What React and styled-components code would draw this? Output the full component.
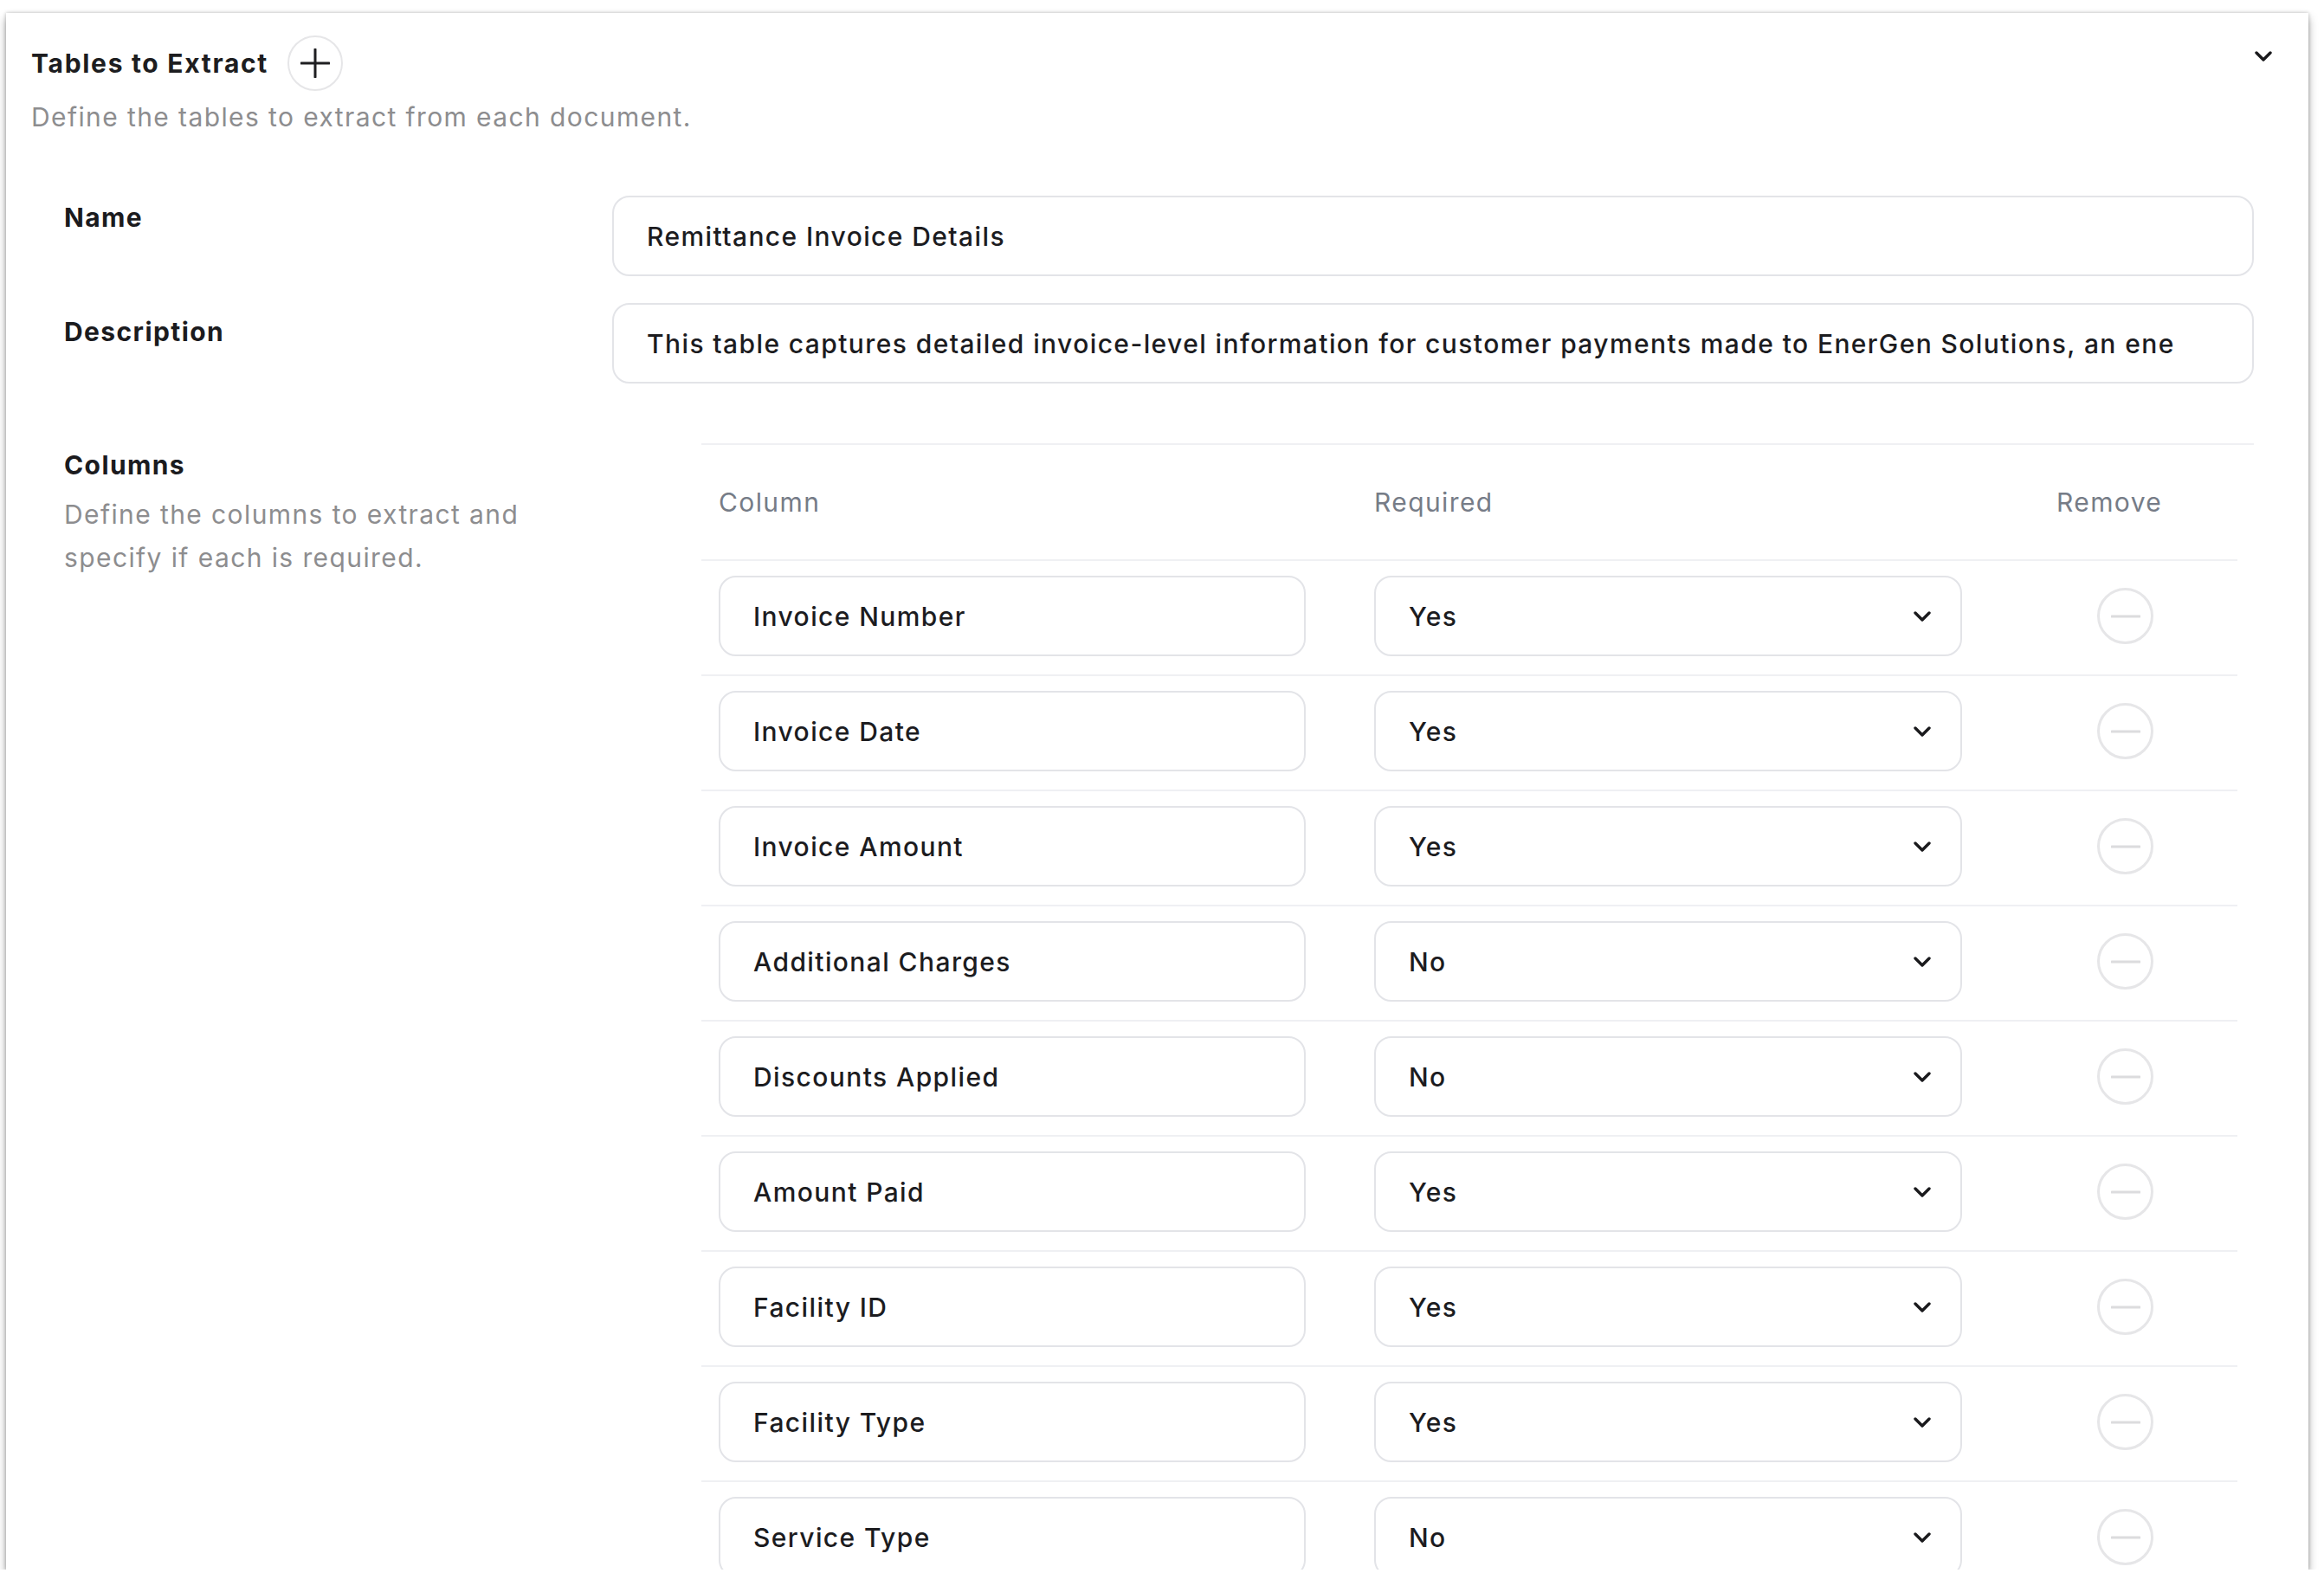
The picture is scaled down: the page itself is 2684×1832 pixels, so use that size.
import React from "react";
import styled, { createGlobalStyle } from "styled-components";

const GlobalStyle = createGlobalStyle`
  html, body {
    margin: 0;
    padding: 0;
    background: #ffffff;
  }
  body {
    font-family: Inter, "Noto Sans", "Liberation Sans", sans-serif;
    letter-spacing: 1.4px;
    -webkit-font-smoothing: antialiased;
  }
  * { box-sizing: border-box; }
`;

const Card = styled.section`
  margin: 15px 0 0 7px;
  width: 2659px;
  height: 1798px;
  overflow: hidden;
  background: #ffffff;
  box-shadow: 0 6px 10px rgba(0, 0, 0, 0.34), 0 0 4px rgba(0, 0, 0, 0.24);
  padding: 26px 0 0 29px;
`;

const HeaderRow = styled.div`
  display: flex;
  align-items: center;
  height: 64px;
  padding-right: 42px;
`;

const Title = styled.h2`
  margin: 0;
  font-size: 30px;
  line-height: 36px;
  font-weight: 700;
  color: #1d1d20;
  letter-spacing: 1.7px;
`;

const RoundButton = styled.button`
  width: ${(p) => p.size}px;
  height: ${(p) => p.size}px;
  margin-left: ${(p) => p.offset || 0}px;
  border-radius: 50%;
  border: ${(p) => p.border}px solid #e6e6e8;
  background: #ffffff;
  display: flex;
  align-items: center;
  justify-content: center;
  padding: 0;
  flex: none;
  cursor: pointer;
`;

const CollapseToggle = styled.div`
  margin-left: auto;
  align-self: flex-start;
  margin-top: 18px;
  display: flex;
`;

const Subtitle = styled.p`
  margin: 12px 0 0;
  font-size: 30px;
  line-height: 36px;
  color: #8d8d8f;
  font-weight: 400;
`;

const Form = styled.div`
  margin-top: 73px;
  padding: 0 63px 0 38px;
  display: flex;
  flex-direction: column;
  gap: 31px;
`;

const FieldRow = styled.div`
  display: grid;
  grid-template-columns: ${(p) => p.labelWidth}px 1fr;
  align-items: start;
`;

const Label = styled.div`
  padding-top: ${(p) => p.top || 7}px;
  font-size: 30px;
  line-height: 36px;
  font-weight: 650;
  color: #1b1b1e;
`;

const HelpText = styled.p`
  margin: 14px 0 0;
  max-width: 600px;
  font-size: 30px;
  line-height: 50px;
  color: #8d8d8f;
`;

const TextBox = styled.div`
  height: 93px;
  border: 2px solid #e3e4e8;
  border-radius: 20px;
  background: #ffffff;
  display: flex;
  align-items: center;
  padding: 0 38px;
  font-size: 30px;
  font-weight: 500;
  color: #1c1c1f;
  white-space: nowrap;
  overflow: hidden;
`;

const SelectBox = styled(TextBox)`
  justify-content: space-between;
  padding-right: 34px;
`;

const ColumnsSection = styled(FieldRow)`
  margin-top: 38px;
`;

const Table = styled.div`
  border-top: 2px solid #eff0f3;
`;

const Row = styled.div`
  display: grid;
  grid-template-columns: 678px 679px 1fr;
  column-gap: 79px;
  align-items: center;
  margin-right: 19px;
  padding: ${(p) => (p.header ? "0 0 0 20px" : "17px 0 21px 20px")};
  height: ${(p) => (p.header ? "134px" : "auto")};
  border-bottom: 2px solid #eff0f3;
`;

const HeadCell = styled.div`
  font-size: 30px;
  line-height: 36px;
  color: #767c87;
  padding-left: ${(p) => p.indent || 0}px;
`;

const RemoveCell = styled.div`
  display: flex;
  padding-left: 77px;
`;

const PlusIcon = () => (
  <svg width="34" height="34" viewBox="0 0 34 34" fill="none">
    <path d="M17 1v32M1 17h32" stroke="#1e1e21" strokeWidth="3" strokeLinecap="round" />
  </svg>
);

const MinusIcon = () => (
  <svg width="34" height="4" viewBox="0 0 34 4" fill="none">
    <path d="M1 2h32" stroke="#dcdcde" strokeWidth="3" strokeLinecap="round" />
  </svg>
);

const Chevron = ({ w = 20, h = 12, sw = 3.4 }) => (
  <svg width={w} height={h} viewBox="0 0 20 12" fill="none">
    <path d="M2 2l8 8 8-8" stroke="#1a1a1d" strokeWidth={sw} strokeLinecap="round" strokeLinejoin="round" />
  </svg>
);

const columns = [
  ["Invoice Number", "Yes"],
  ["Invoice Date", "Yes"],
  ["Invoice Amount", "Yes"],
  ["Additional Charges", "No"],
  ["Discounts Applied", "No"],
  ["Amount Paid", "Yes"],
  ["Facility ID", "Yes"],
  ["Facility Type", "Yes"],
  ["Service Type", "No"],
];

export default function App() {
  return (
    <>
      <GlobalStyle />
      <Card>
        <HeaderRow>
          <Title>Tables to Extract</Title>
          <RoundButton size={64} border={2} offset={22} aria-label="Add table">
            <PlusIcon />
          </RoundButton>
          <CollapseToggle>
            <Chevron w={20} h={12} sw={3.4} />
          </CollapseToggle>
        </HeaderRow>
        <Subtitle>Define the tables to extract from each document.</Subtitle>

        <Form>
          <FieldRow labelWidth={633}>
            <Label>Name</Label>
            <TextBox>Remittance Invoice Details</TextBox>
          </FieldRow>
          <FieldRow labelWidth={633}>
            <Label top={15}>Description</Label>
            <TextBox>
              This table captures detailed invoice-level information for customer payments made to EnerGen Solutions, an ene
            </TextBox>
          </FieldRow>

          <ColumnsSection labelWidth={736}>
            <div>
              <Label>Columns</Label>
              <HelpText>Define the columns to extract and specify if each is required.</HelpText>
            </div>
            <Table>
              <Row header>
                <HeadCell>Column</HeadCell>
                <HeadCell>Required</HeadCell>
                <HeadCell indent={30}>Remove</HeadCell>
              </Row>
              {columns.map(([name, req]) => (
                <Row key={name}>
                  <TextBox>{name}</TextBox>
                  <SelectBox>
                    <span>{req}</span>
                    <Chevron w={20} h={12} sw={3.4} />
                  </SelectBox>
                  <RemoveCell>
                    <RoundButton size={65} border={3} aria-label={`Remove ${name}`}>
                      <MinusIcon />
                    </RoundButton>
                  </RemoveCell>
                </Row>
              ))}
            </Table>
          </ColumnsSection>
        </Form>
      </Card>
    </>
  );
}
